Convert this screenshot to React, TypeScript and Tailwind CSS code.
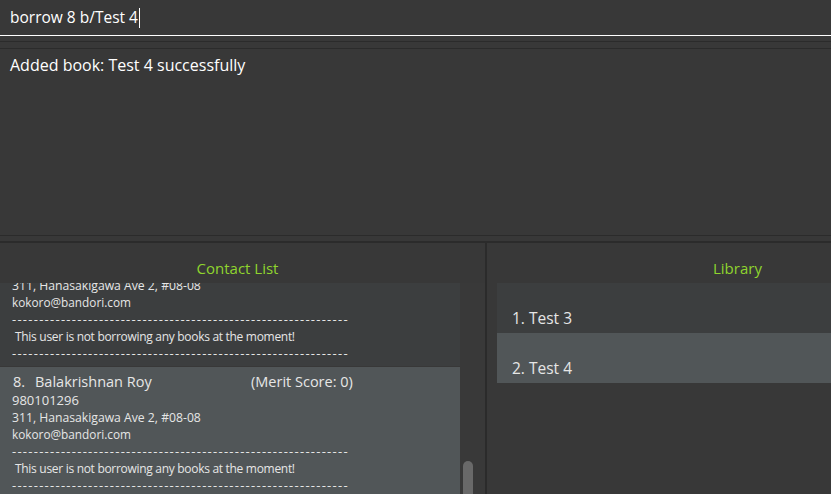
import React from "react";

const font = { fontFamily: '"Open Sans", "Noto Sans", sans-serif' };
const dash = "-".repeat(62);

function CellBody({ address, email }: { address: string; email: string }) {
  return (
    <>
      <div className="text-[12.2px]">{address}</div>
      <div className="text-[11.8px]">{email}</div>
      <div className="text-[13px] tracking-[1.25px]">{dash}</div>
      <div className="pl-[3px] text-[12px] tracking-[-0.3px]">
        This user is not borrowing any books at the moment!
      </div>
      <div className="text-[13px] tracking-[1.25px]">{dash}</div>
    </>
  );
}

function ContactCell({
  idx,
  name,
  phone,
  address,
  email,
  bg,
}: {
  idx: number;
  name: string;
  phone: string;
  address: string;
  email: string;
  bg: string;
}) {
  return (
    <div className={`${bg} h-[132px] pl-[12px] pt-[5px] text-[#e6e6e6]`}>
      <div className="flex h-[20px] items-center text-[14.5px] leading-[20px]">
        <span className="w-[23px] pl-[1px]">{idx}.</span>
        <span className="w-[216px]">{name}</span>
        <span>(Merit Score: 0)</span>
      </div>
      <div className="leading-[17px]">
        <div className="text-[13px]">{phone}</div>
        <CellBody address={address} email={email} />
      </div>
    </div>
  );
}

export default function App() {
  return (
    <div
      className="flex h-[494px] w-[831px] flex-col overflow-hidden bg-[#383838] text-white"
      style={font}
    >
      <div className="flex h-[36px] shrink-0 items-center border-b border-white px-[10px] text-[15.5px]">
        <span>borrow 8 b/Test 4</span>
        <span className="ml-[1px] h-[20px] w-[1px] bg-white" />
      </div>
      <div className="h-[5px] shrink-0" />
      <div className="h-[8px] shrink-0 border-y border-[#2b2b2b]" />
      <div className="h-[186px] shrink-0 px-[10px] pt-[5px] text-[16px] leading-[22px] text-white">
        Added book: Test 4 successfully
      </div>
      <div className="h-[8px] shrink-0 border-t border-[#2b2b2b] border-b-2" />
      <div className="flex min-h-0 flex-1">
        <div className="flex w-[485px] shrink-0 flex-col">
          <div className="flex h-[40px] shrink-0 justify-center pr-[10px] pt-[15px] text-[15px] leading-[20px] text-[#8fd42e]">
            Contact List
          </div>
          <div className="flex min-h-0 flex-1">
            <div className="w-[460px] overflow-hidden bg-[#3c3e3f]">
              <div className="h-[83px] overflow-hidden bg-[#3c3e3f] pl-[12px] text-[#e6e6e6]">
                <div className="-mt-[6px] leading-[17px]">
                  <CellBody address="311, Hanasakigawa Ave 2, #08-08" email="kokoro@bandori.com" />
                </div>
              </div>
              <div className="h-[1px] bg-[#383838]" />
              <ContactCell
                idx={8}
                name="Balakrishnan Roy"
                phone="980101296"
                address="311, Hanasakigawa Ave 2, #08-08"
                email="kokoro@bandori.com"
                bg="bg-[#515658]"
              />
            </div>
            <div className="relative flex-1 bg-[#393939]">
              <div className="absolute left-[3px] top-[178px] h-[40px] w-[10px] rounded-[5px] bg-[#696969]" />
            </div>
          </div>
        </div>
        <div className="w-[2px] shrink-0 bg-[#2b2b2b]" />
        <div className="flex min-w-0 flex-1 flex-col">
          <div className="flex h-[40px] shrink-0 pl-[226px] pt-[15px] text-[15px] leading-[20px] text-[#8fd42e]">
            Library
          </div>
          <div className="ml-[10px] flex flex-col text-[15.5px] text-[#e6e6e6]">
            <div className="flex h-[50px] items-end bg-[#3c3e3f] pb-[3px] pl-[15px]">1. Test 3</div>
            <div className="flex h-[50px] items-end bg-[#515658] pb-[3px] pl-[15px]">2. Test 4</div>
          </div>
        </div>
      </div>
    </div>
  );
}
